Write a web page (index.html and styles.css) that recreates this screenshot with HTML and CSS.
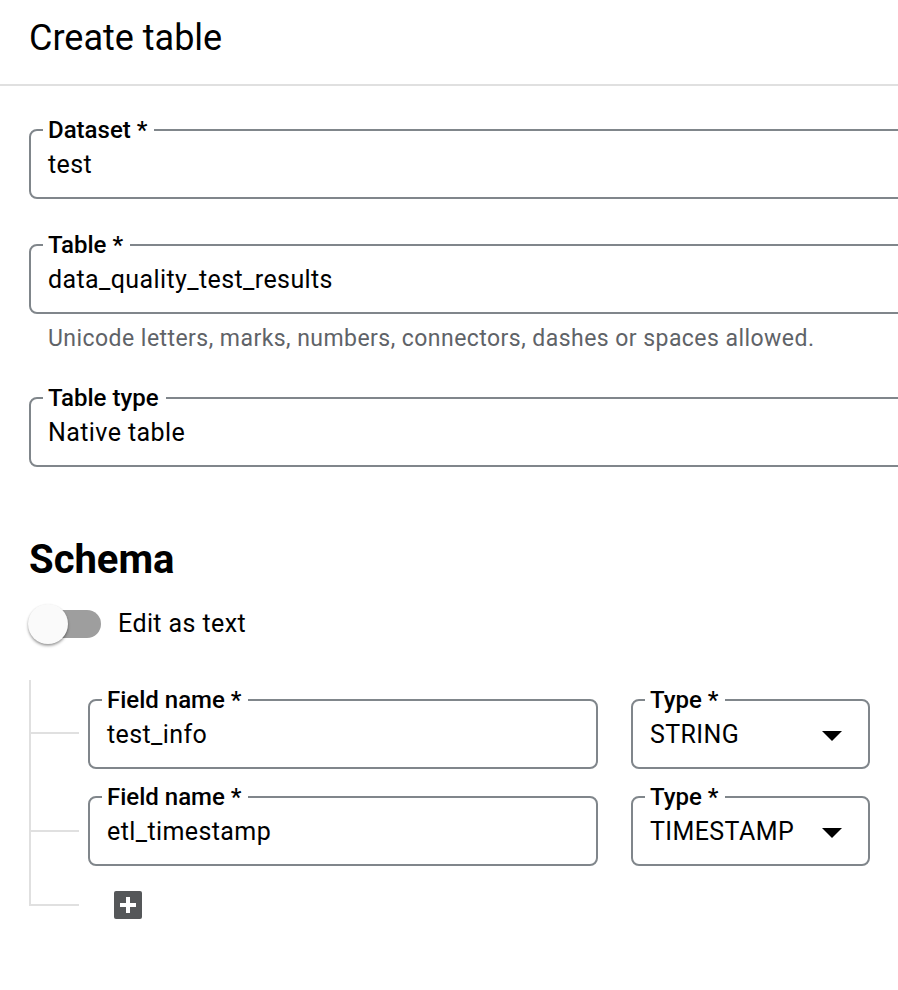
FILE: index.html
```html
<!DOCTYPE html>
<html lang="en">
<head>
<meta charset="utf-8">
<title>Create table</title>
<link rel="stylesheet" href="styles.css">
</head>
<body>
<header class="header">
  <h1 class="title">Create table</h1>
</header>
<main class="form">
  <fieldset class="field field-wide">
    <legend class="label">Dataset *</legend>
    <div class="value">test</div>
  </fieldset>
  <fieldset class="field field-wide field-table">
    <legend class="label">Table *</legend>
    <div class="value">data_quality_test_results</div>
  </fieldset>
  <p class="hint">Unicode letters, marks, numbers, connectors, dashes or spaces allowed.</p>
  <fieldset class="field field-wide field-type">
    <legend class="label">Table type</legend>
    <div class="value">Native table</div>
  </fieldset>

  <h2 class="schema-title">Schema</h2>
  <div class="toggle-row">
    <span class="switch"><span class="switch-track"></span><span class="switch-thumb"></span></span>
    <span class="toggle-label">Edit as text</span>
  </div>

  <div class="tree">
    <div class="tree-row">
      <span class="connector connector-1"></span>
      <fieldset class="field field-name">
        <legend class="label">Field name *</legend>
        <div class="value">test_info</div>
      </fieldset>
      <fieldset class="field field-select">
        <legend class="label">Type *</legend>
        <div class="value select-value"><span>STRING</span>
          <svg class="arrow" width="20" height="10" viewBox="0 0 20 10"><polygon points="0,0 20,0 10,10" fill="#000"/></svg>
        </div>
      </fieldset>
    </div>
    <div class="tree-row">
      <span class="connector connector-2"></span>
      <fieldset class="field field-name">
        <legend class="label">Field name *</legend>
        <div class="value">etl_timestamp</div>
      </fieldset>
      <fieldset class="field field-select">
        <legend class="label">Type *</legend>
        <div class="value select-value"><span>TIMESTAMP</span>
          <svg class="arrow" width="20" height="10" viewBox="0 0 20 10"><polygon points="0,0 20,0 10,10" fill="#000"/></svg>
        </div>
      </fieldset>
    </div>
    <div class="add-row">
      <span class="connector connector-add"></span>
      <button class="add-btn" type="button" aria-label="Add field">
        <svg width="28" height="28" viewBox="0 0 28 28"><rect x="6" y="12" width="16" height="4" fill="#fff"/><rect x="12" y="6" width="4" height="16" fill="#fff"/></svg>
      </button>
    </div>
  </div>
</main>
</body>
</html>
```
FILE: styles.css
```css
html {
  overflow: hidden;
  background: #fff;
}
body {
  margin: 0;
  padding: 0 0 60px 0;
  font-family: Roboto, "Liberation Sans", Arial, sans-serif;
  color: #000;
  width: 898px;
}
.header {
  padding: 16px 28px 24px 29px;
  border-bottom: 2px solid #e0e0e0;
}
.title {
  margin: 0;
  font-size: 36px;
  line-height: 44px;
  font-weight: 400;
  color: #000;
}
.form {
  padding: 30px 0 0 29px;
}
.field {
  margin: 0;
  border: 2px solid #80868b;
  border-radius: 8px;
  padding: 7px 17px 18px 17px;
  box-sizing: border-box;
  min-width: 0;
}
.field-wide {
  width: 1000px;
}
.field-table {
  margin-top: 32px;
}
.field-type {
  margin-top: 33px;
}
.label {
  font-size: 24px;
  line-height: 28px;
  font-weight: 500;
  color: #000;
  padding: 0 7px 0 5px;
  margin-left: -5px;
}
.value {
  font-size: 25px;
  line-height: 28px;
  letter-spacing: 0.4px;
  color: #000;
}
.hint {
  margin: 13px 0 0 19px;
  font-size: 23px;
  line-height: 24px;
  letter-spacing: 0.45px;
  color: #5f6368;
}
.schema-title {
  margin: 71px 0 0 0;
  font-size: 40px;
  line-height: 44px;
  font-weight: 700;
  color: #000;
}
.toggle-row {
  margin-top: 22px;
  display: flex;
  align-items: center;
  height: 40px;
}
.switch {
  position: relative;
  display: block;
  width: 72px;
  height: 40px;
}
.switch-track {
  position: absolute;
  left: 0;
  top: 6px;
  width: 72px;
  height: 28px;
  border-radius: 14px;
  background: #9e9e9e;
}
.switch-thumb {
  position: absolute;
  left: -1px;
  top: 0;
  width: 40px;
  height: 40px;
  border-radius: 50%;
  background: #fafafa;
  box-shadow: 0 2px 3px rgba(0,0,0,0.3), 0 1px 2px rgba(0,0,0,0.15);
}
.toggle-label {
  margin-left: 17px;
  font-size: 25px;
  line-height: 28px;
  letter-spacing: 0.4px;
  color: #000;
}
.tree {
  margin-top: 36px;
  border-left: 2px solid #e0e0e0;
  padding-top: 6px;
  display: flex;
  flex-direction: column;
  gap: 14px;
  width: 840px;
}
.tree-row {
  display: flex;
  align-items: flex-start;
}
.connector {
  display: block;
  width: 48px;
  height: 2px;
  background: #e0e0e0;
  flex: none;
}
.connector-1 { margin-top: 46px; margin-right: 9px; }
.connector-2 { margin-top: 47px; margin-right: 9px; }
.field-name {
  width: 510px;
  flex: none;
}
.field-select {
  width: 239px;
  margin-left: 33px;
  flex: none;
  padding-right: 26px;
}
.select-value {
  display: flex;
  align-items: center;
  justify-content: space-between;
}
.arrow {
  display: block;
  margin-top: 1px;
}
.add-row {
  display: flex;
  align-items: flex-end;
  height: 26px;
}
.connector-add {
  margin-right: 35px;
}
.add-btn {
  display: block;
  width: 28px;
  height: 28px;
  margin: 0 0 -13px 0;
  padding: 0;
  border: 0;
  border-radius: 2px;
  background: #555759;
  cursor: pointer;
}
.add-btn svg {
  display: block;
}
```
